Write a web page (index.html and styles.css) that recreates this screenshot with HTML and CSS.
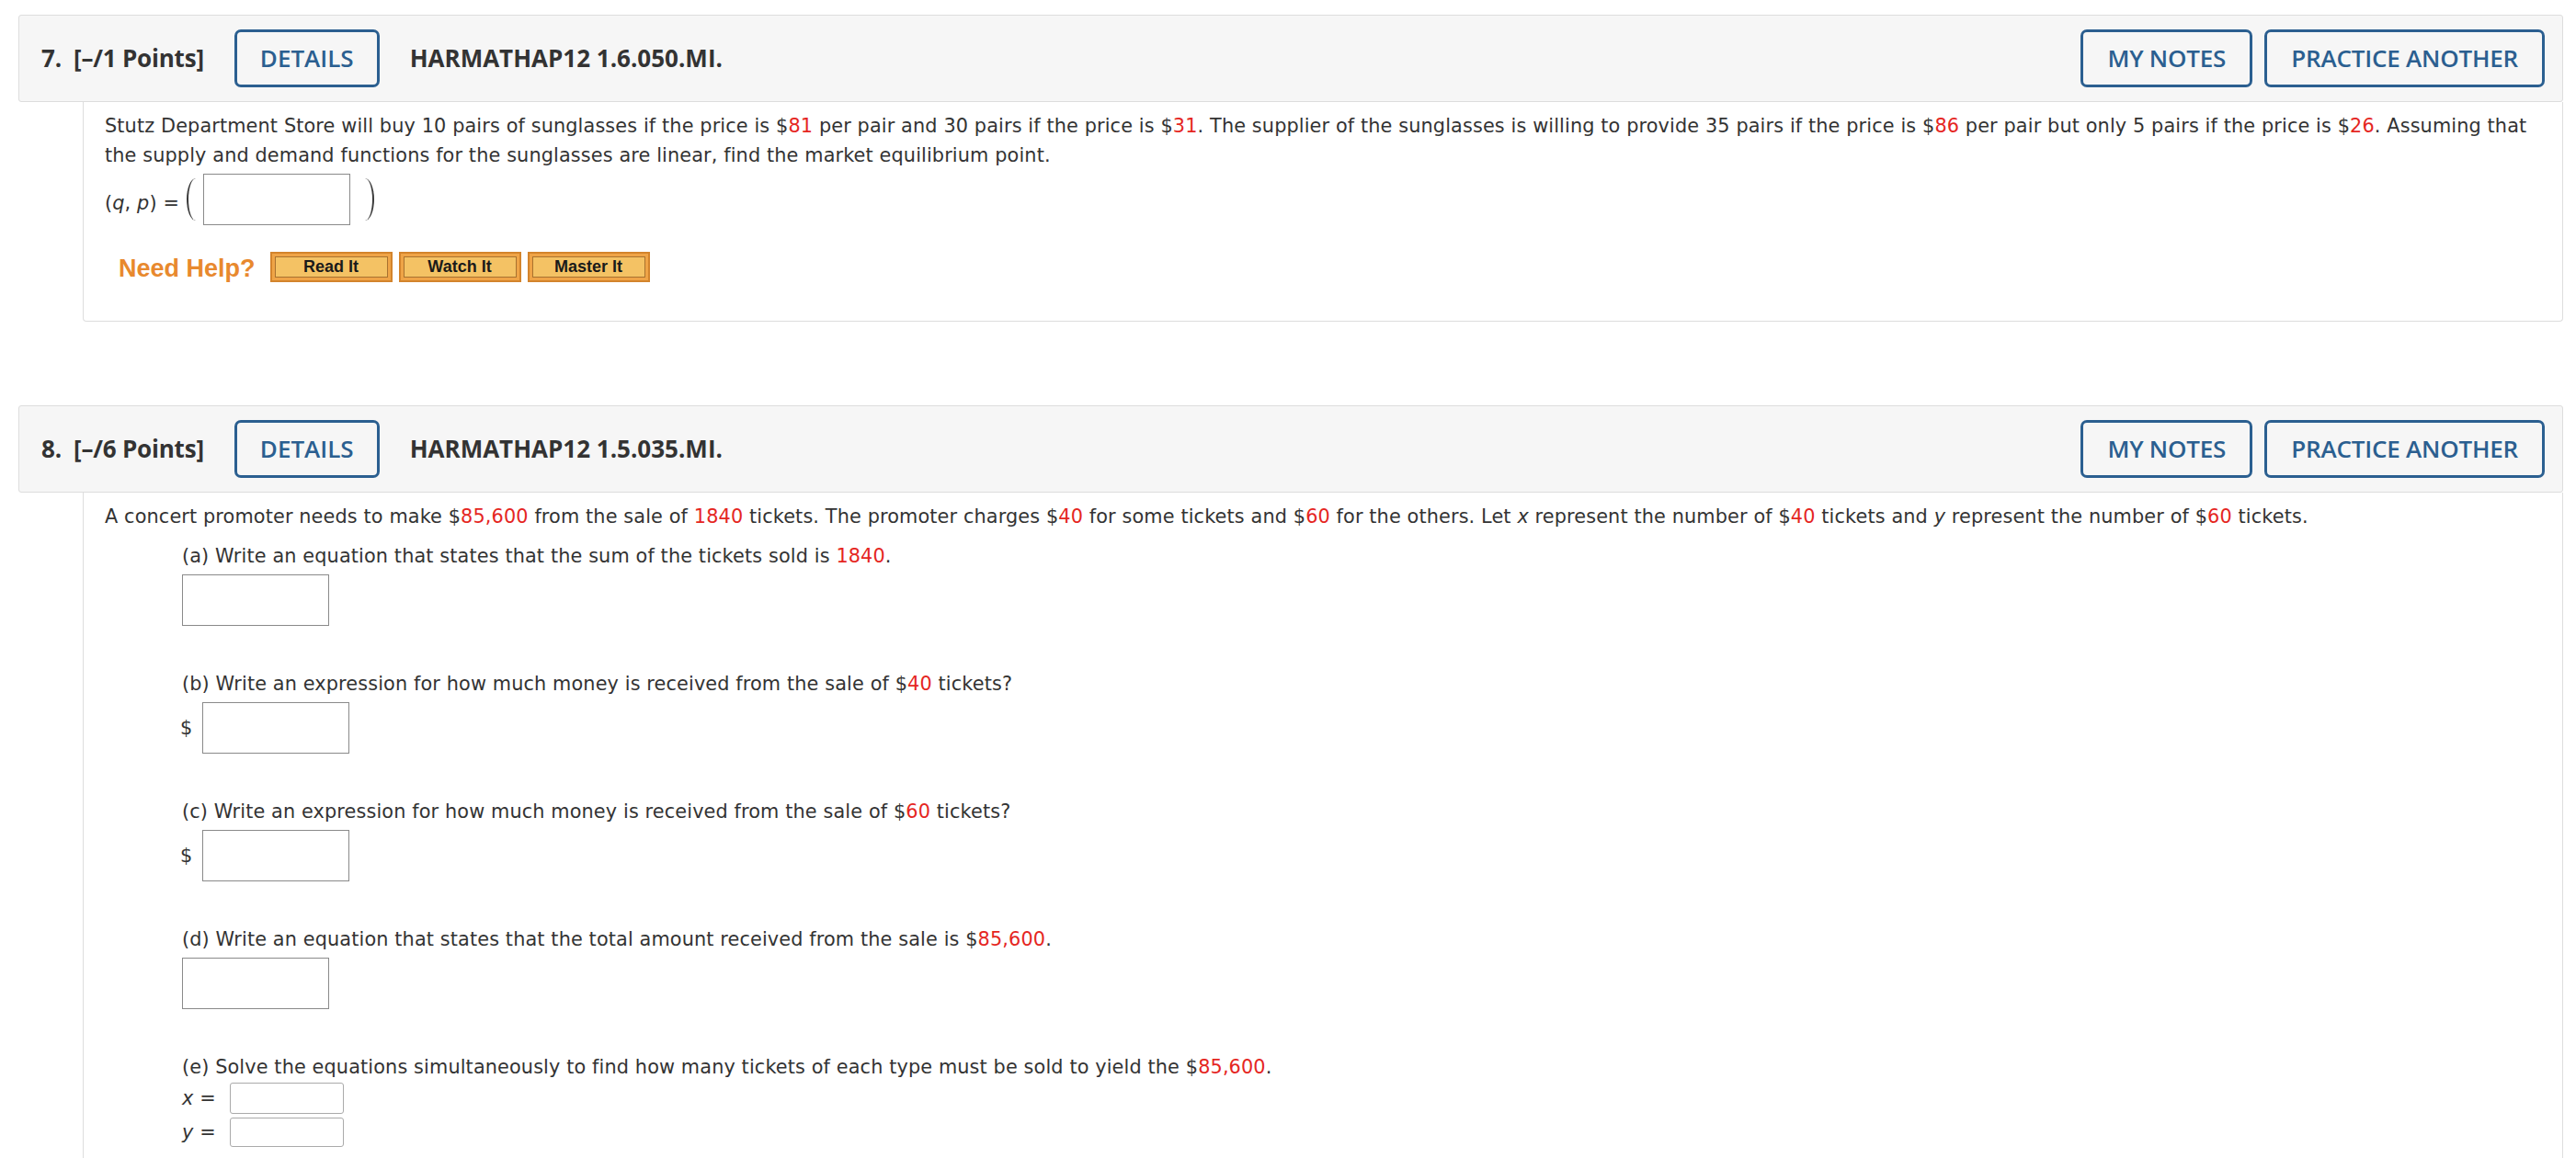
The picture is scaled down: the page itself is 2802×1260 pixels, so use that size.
FILE: index.html
```html
<!DOCTYPE html>
<html lang="en">
<head>
<meta charset="utf-8">
<title>WebAssign questions</title>
<link rel="stylesheet" href="styles.css">
</head>
<body>
<div class="page">

  <section class="question q7">
    <div class="q-head">
      <span class="q-num">7.&nbsp; [–/1 Points]</span>
      <button class="btn-outline">DETAILS</button>
      <span class="q-code">HARMATHAP12 1.6.050.MI.</span>
      <div class="q-actions">
        <button class="btn-outline btn-strong">MY NOTES</button>
        <button class="btn-outline btn-strong">PRACTICE ANOTHER</button>
      </div>
    </div>
    <div class="q-body">
      <p class="stem">Stutz Department Store will buy 10 pairs of sunglasses if the price is $<span class="red">81</span> per pair and 30 pairs if the price is $<span class="red">31</span>. The supplier of the sunglasses is willing to provide 35 pairs if the price is $<span class="red">86</span> per pair but only 5 pairs if the price is $<span class="red">26</span>. Assuming that the supply and demand functions for the sunglasses are linear, find the market equilibrium point.</p>
      <div class="qp-row">
        <span class="math">(<i>q</i>, <i>p</i>) =</span>
        <span class="paren paren-l"></span>
        <span class="box box-qp"></span>
        <span class="paren paren-r"></span>
      </div>
      <div class="help-row">
        <span class="help-label">Need Help?</span>
        <span class="help-btns">
          <button class="help-btn"><span class="help-inner">Read It</span></button>
          <button class="help-btn"><span class="help-inner">Watch It</span></button>
          <button class="help-btn"><span class="help-inner">Master It</span></button>
        </span>
      </div>
    </div>
  </section>

  <section class="question q8">
    <div class="q-head">
      <span class="q-num">8.&nbsp; [–/6 Points]</span>
      <button class="btn-outline">DETAILS</button>
      <span class="q-code">HARMATHAP12 1.5.035.MI.</span>
      <div class="q-actions">
        <button class="btn-outline btn-strong">MY NOTES</button>
        <button class="btn-outline btn-strong">PRACTICE ANOTHER</button>
      </div>
    </div>
    <div class="q-body q-body-open">
      <p class="stem">A concert promoter needs to make $<span class="red">85,600</span> from the sale of <span class="red">1840</span> tickets. The promoter charges $<span class="red">40</span> for some tickets and $<span class="red">60</span> for the others. Let <i>x</i> represent the number of $<span class="red">40</span> tickets and <i>y</i> represent the number of $<span class="red">60</span> tickets.</p>

      <div class="part part-first">
        <p class="part-label">(a) Write an equation that states that the sum of the tickets sold is <span class="red">1840</span>.</p>
        <div class="part-answer"><span class="box box-lg"></span></div>
      </div>

      <div class="part">
        <p class="part-label">(b) Write an expression for how much money is received from the sale of $<span class="red">40</span> tickets?</p>
        <div class="part-answer"><span class="unit">$</span><span class="box box-lg"></span></div>
      </div>

      <div class="part">
        <p class="part-label">(c) Write an expression for how much money is received from the sale of $<span class="red">60</span> tickets?</p>
        <div class="part-answer"><span class="unit">$</span><span class="box box-lg"></span></div>
      </div>

      <div class="part">
        <p class="part-label">(d) Write an equation that states that the total amount received from the sale is $<span class="red">85,600</span>.</p>
        <div class="part-answer"><span class="box box-lg"></span></div>
      </div>

      <div class="part">
        <p class="part-label">(e) Solve the equations simultaneously to find how many tickets of each type must be sold to yield the $<span class="red">85,600</span>.</p>
        <div class="var-rows">
          <div class="var-row"><span class="var-label"><i>x</i> =</span><span class="box box-sm box-sm-1"></span></div>
          <div class="var-row"><span class="var-label"><i>y</i> =</span><span class="box box-sm"></span></div>
        </div>
      </div>
    </div>
  </section>

</div>
</body>
</html>
```

FILE: styles.css
```css
html, body {
  margin: 0;
  padding: 0;
  background: #ffffff;
  overflow: hidden;
}

.page {
  width: 2768px;
  padding: 16px 0 0 20px;
  font-family: "DejaVu Sans", Verdana, sans-serif;
  color: #333333;
}

.question + .question {
  margin-top: 91px;
}

/* ---------- header bar ---------- */
.q-head {
  display: flex;
  align-items: center;
  gap: 33px;
  background: #f6f6f6;
  border: 1px solid #dddddd;
  border-radius: 3px;
  padding: 15px 19px 15px 24px;
  font-family: "Open Sans", "Liberation Sans", sans-serif;
  font-size: 26px;
  line-height: 35px;
  color: #333333;
}

.q-num,
.q-code {
  font-weight: 700;
  white-space: nowrap;
}

.q-num {
  letter-spacing: -0.2px;
}

.q-actions {
  margin-left: auto;
  display: flex;
  gap: 13px;
}

.btn-outline {
  font-family: "Open Sans", "Liberation Sans", sans-serif;
  font-size: 26px;
  font-weight: 600;
  line-height: 35px;
  color: #2b5f90;
  background: transparent;
  border: 3px solid #2b5f90;
  border-radius: 7px;
  padding: 11px 25px;
  margin: 0;
  white-space: nowrap;
}

.btn-strong {
  padding: 11px 26px;
  letter-spacing: -0.2px;
}

/* ---------- body ---------- */
.q-body {
  margin-left: 70px;
  border: 1px solid #dddddd;
  border-top: none;
  border-radius: 0 0 4px 4px;
  padding: 10px 20px 42px 23px;
  font-size: 20.8px;
  letter-spacing: 0.13px;
  line-height: 32px;
}

.q-body-open {
  padding-bottom: 120px;
}

.stem {
  margin: 0;
}

.red {
  color: #e5261f;
}

.qp-row {
  display: flex;
  align-items: center;
  margin-top: 4px;
  height: 56px;
}

.math {
  margin-right: 8px;
  position: relative;
  top: 4px;
}

.paren {
  display: block;
  width: 10px;
  height: 46px;
  box-sizing: border-box;
}

.paren-l {
  border-left: 2px solid #3a3a3a;
  border-radius: 10px 0 0 10px / 23px 0 0 23px;
  margin-right: 8px;
}

.paren-r {
  border-right: 2px solid #3a3a3a;
  border-radius: 0 10px 10px 0 / 0 23px 23px 0;
  margin-left: 16px;
}

.box {
  display: block;
  box-sizing: border-box;
  background: #ffffff;
  border: 1px solid #8a8a8a;
}

.box-qp {
  width: 160px;
  height: 56px;
}

/* ---------- need help ---------- */
.help-row {
  display: flex;
  align-items: center;
  margin-top: 29px;
  margin-left: 15px;
  height: 33px;
  letter-spacing: 0;
}

.help-label {
  font-family: "Liberation Sans", Arial, sans-serif;
  font-weight: 700;
  font-size: 27px;
  color: #e8892e;
  margin-right: 16px;
  position: relative;
  top: 1px;
}

.help-btns {
  display: flex;
  gap: 7px;
}

.help-btn {
  width: 133px;
  height: 33px;
  box-sizing: border-box;
  padding: 3px;
  margin: 0;
  border: 2px solid #d3842c;
  background: #efa447;
  display: flex;
}

.help-inner {
  flex: 1;
  display: flex;
  align-items: center;
  justify-content: center;
  border: 1px solid #a9722f;
  background: #f4c264;
  font-family: "Liberation Sans", Arial, sans-serif;
  font-weight: 700;
  font-size: 18px;
  color: #1a1a1a;
}

/* ---------- parts ---------- */
.part {
  margin-left: 84px;
  margin-top: 47px;
}

.part-first {
  margin-top: 11px;
}

.part-label {
  margin: 0;
}

.part-answer {
  display: flex;
  align-items: center;
  margin-top: 4px;
}

.unit {
  width: 22px;
  position: relative;
  left: -2px;
}

.box-lg {
  width: 160px;
  height: 56px;
}

.var-rows {
  display: flex;
  flex-direction: column;
  gap: 4px;
  margin-top: 1px;
}

.var-row {
  display: flex;
  align-items: center;
}

.var-label {
  width: 52px;
  white-space: pre;
}

.box-sm {
  width: 124px;
  height: 32px;
  border: 1px solid #aaaaaa;
  border-radius: 3px;
}

.box-sm-1 {
  height: 34px;
}
```
